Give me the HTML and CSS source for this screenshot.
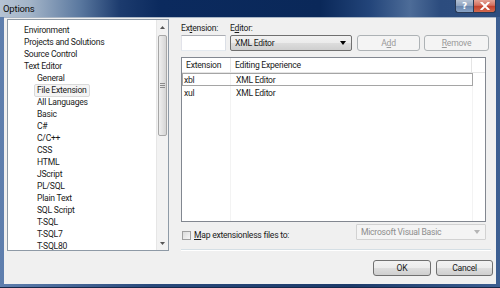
FILE: index.html
```html
<!DOCTYPE html>
<html>
<head>
<meta charset="utf-8">
<link rel="stylesheet" href="styles.css">
</head>
<body>
<div class="window">
  <div class="titlebar">
    <span class="title">Options</span>
    <div class="caption-buttons">
      <div class="cb help">?</div>
      <div class="cb close">
        <svg width="10" height="8" viewBox="0 0 10 8"><path d="M1.5 0.5 L8.5 7.5 M8.5 0.5 L1.5 7.5" stroke="#fff" stroke-width="2" stroke-linecap="square"/></svg>
      </div>
    </div>
  </div>
  <div class="client">
    <div class="main">
      <div class="tree">
        <ul class="tree-items">
          <li class="lvl0">Environment</li>
          <li class="lvl0">Projects and Solutions</li>
          <li class="lvl0">Source Control</li>
          <li class="lvl0">Text Editor</li>
          <li class="lvl1">General</li>
          <li class="lvl1"><span class="selected">File Extension</span></li>
          <li class="lvl1">All Languages</li>
          <li class="lvl1">Basic</li>
          <li class="lvl1">C#</li>
          <li class="lvl1">C/C++</li>
          <li class="lvl1">CSS</li>
          <li class="lvl1">HTML</li>
          <li class="lvl1">JScript</li>
          <li class="lvl1">PL/SQL</li>
          <li class="lvl1">Plain Text</li>
          <li class="lvl1">SQL Script</li>
          <li class="lvl1">T-SQL</li>
          <li class="lvl1">T-SQL7</li>
          <li class="lvl1">T-SQL80</li>
        </ul>
        <div class="vscroll">
          <div class="sarrow up"><svg width="5" height="3" viewBox="0 0 5 3"><path d="M0 3 L2.5 0 L5 3Z" fill="#555"/></svg></div>
          <div class="track">
            <div class="thumb">
              <div class="grip"></div>
            </div>
          </div>
          <div class="sarrow down"><svg width="5" height="3" viewBox="0 0 5 3"><path d="M0 0 L2.5 3 L5 0Z" fill="#555"/></svg></div>
        </div>
      </div>
      <div class="panel">
        <div class="labels">
          <span class="lbl lbl-ext">Ex<u>t</u>ension:</span>
          <span class="lbl">E<u>d</u>itor:</span>
        </div>
        <div class="controls">
          <div class="textbox"></div>
          <div class="combo combo-editor">
            <span>XML Editor</span>
            <svg width="6" height="4" viewBox="0 0 6 4"><path d="M0 0 L6 0 L3 4Z" fill="#000"/></svg>
          </div>
          <div class="btn btn-disabled btn-add">A<u>d</u>d</div>
          <div class="btn btn-disabled btn-remove"><u>R</u>emove</div>
        </div>
        <div class="listview">
          <div class="lv-header">
            <div class="col c1">Extension</div>
            <div class="col c2">Editing Experience</div>
            <div class="col c3"></div>
          </div>
          <div class="lv-body">
            <div class="colline l1"></div>
            <div class="colline l2"></div>
            <div class="row focused"><span class="c1">xbl</span><span class="c2">XML Editor</span></div>
            <div class="row"><span class="c1">xul</span><span class="c2">XML Editor</span></div>
          </div>
        </div>
        <div class="map-row">
          <div class="check-wrap">
            <span class="checkbox"></span>
            <span class="map-label"><u>M</u>ap extensionless files to:</span>
          </div>
          <div class="combo combo-disabled">
            <span>Microsoft Visual Basic</span>
            <svg width="6" height="4" viewBox="0 0 6 4"><path d="M0 0 L6 0 L3 4Z" fill="#b5b5b5"/></svg>
          </div>
        </div>
        <div class="sep"></div>
      </div>
    </div>
    <div class="buttons">
      <div class="btn btn-ok">OK</div>
      <div class="btn btn-cancel">Cancel</div>
    </div>
  </div>
</div>
</body>
</html>
```

FILE: styles.css
```css
* { box-sizing: border-box; }
html, body { margin: 0; padding: 0; }
body {
  width: 500px;
  height: 288px;
  overflow: hidden;
  font-family: Roboto, "Noto Sans", sans-serif;
  font-size: 8.6px;
  letter-spacing: -0.25px;
  color: #1a1a1a;
}
.window {
  width: 500px;
  height: 288px;
  display: flex;
  flex-direction: column;
  background: linear-gradient(to right, #5f7fae, #2a4a7c 30%, #1d3b6a 70%, #3d5f92);
  border-bottom: 1px solid #16284a;
}
.titlebar {
  height: 17px;
  flex: none;
  display: flex;
  align-items: flex-start;
  justify-content: space-between;
  background: linear-gradient(to right, #b5c3d3 0px, #a3b4c8 30px, #5a789f 80px, #1c3b6e 120px, #0b2a5e 160px, #0a2859 320px, #23457a 370px, #4d6c98 410px, #2c4c7e 440px, #2e4e80 500px);
}
.title {
  padding: 3px 0 0 3px;
  font-size: 9.5px;
  letter-spacing: -0.2px;
  color: #0d0d0d;
}
.caption-buttons {
  display: flex;
  margin-right: 4px;
}
.cb {
  height: 13px;
  display: flex;
  align-items: center;
  justify-content: center;
  border: 1px solid #2a3a55;
  border-top: none;
}
.help {
  width: 18px;
  border-radius: 0 0 0 3px;
  border-right: none;
  background: linear-gradient(#b4c1d3, #8ea2bf 50%, #6a86ad 51%, #89a3c6);
  color: #fff;
  font-family: "DejaVu Sans", sans-serif;
  font-weight: bold;
  font-size: 9px;
  letter-spacing: 0;
}
.close {
  width: 23px;
  border-radius: 0 0 3px 0;
  background: linear-gradient(#e4a397, #d46f5e 45%, #c3402c 50%, #d26a4f);
}
.client {
  flex: 1;
  margin: 0 4px 3px 4px;
  background: #f0f0f0;
  display: flex;
  flex-direction: column;
  padding: 1px 0 0 3px;
  border-top: 1px solid #a9b6c6;
}
.main {
  display: flex;
  align-items: flex-start;
}
.tree {
  width: 162px;
  height: 232px;
  border: 1px solid #8e9aa6;
  background: #fff;
  display: flex;
  overflow: hidden;
}
.tree-items {
  list-style: none;
  margin: 0;
  padding: 4px 0 0 0;
  flex: 1;
}
.tree-items li {
  height: 12px;
  line-height: 12px;
  white-space: nowrap;
}
.lvl0 { padding-left: 16px; }
.lvl1 { padding-left: 29px; }
.selected {
  display: inline-block;
  height: 13px;
  line-height: 11px;
  margin-left: -3px;
  padding: 0 2px;
  border: 1px solid #dadada;
  background: #f4f4f4;
  border-radius: 2px;
}
.vscroll {
  width: 12px;
  flex: none;
  display: flex;
  flex-direction: column;
  background: #f2f2f2;
  border-left: 1px solid #e6e6e6;
}
.sarrow {
  height: 14px;
  display: flex;
  align-items: center;
  justify-content: center;
}
.track {
  flex: 1;
  padding: 1px 1px;
}
.thumb {
  height: 101px;
  border: 1px solid #a7a7a7;
  border-radius: 2px;
  background: linear-gradient(to right, #efefef, #e2e2e2 50%, #d5d5d5);
  display: flex;
  align-items: center;
  justify-content: center;
}
.grip {
  width: 5px;
  height: 5px;
  border-top: 1px solid #8b8b8b;
  border-bottom: 1px solid #8b8b8b;
}
.grip::after {
  content: "";
  display: block;
  margin-top: 1px;
  height: 1px;
  background: #8b8b8b;
}
.panel {
  width: 310px;
  margin-left: 12px;
  display: flex;
  flex-direction: column;
}
.labels {
  height: 15px;
  padding-top: 5px;
  display: flex;
  line-height: 9px;
}
.lbl-ext { width: 49px; }
.controls {
  display: flex;
  height: 16px;
  margin-top: 1px;
}
.textbox {
  width: 45px;
  border: 1px solid #abadb3;
  border-color: #abadb3 #dbdfe6 #e3e9ef #e2e3ea;
  background: #fff;
}
.combo {
  display: flex;
  align-items: center;
  justify-content: space-between;
  padding: 0 5px 0 4px;
  border-radius: 2px;
}
.combo-editor {
  width: 122px;
  margin-left: 4px;
  border: 1px solid #707070;
  background: linear-gradient(#f2f2f2, #ebebeb 50%, #dddddd 51%, #cfcfcf);
}
.btn {
  display: flex;
  align-items: center;
  justify-content: center;
  height: 16px;
  border: 1px solid #707070;
  border-radius: 3px;
  background: linear-gradient(#f2f2f2, #ebebeb 50%, #dddddd 51%, #cfcfcf);
}
.btn-disabled {
  border-color: #adb2b5;
  background: #f4f4f4;
  color: #9a9a9a;
}
.btn-add { width: 63px; margin-left: 5px; }
.btn-remove { width: 65px; margin-left: 4px; }
.listview {
  width: 305px;
  height: 165px;
  margin-top: 6px;
  border: 1px solid #828790;
  background: #fff;
  display: flex;
  flex-direction: column;
}
.lv-header {
  height: 15px;
  display: flex;
  flex: none;
  border-bottom: 1px solid #e5e5e5;
}
.lv-header .col {
  line-height: 14px;
  padding-left: 4px;
  border-right: 1px solid #e5e5e5;
}
.lv-header .c1 { width: 49px; }
.lv-header .c2 { width: 241px; }
.lv-header .c3 { flex: 1; border-right: none; }
.lv-body {
  flex: 1;
  position: relative;
}
.colline {
  position: absolute;
  top: 0;
  bottom: 0;
  width: 1px;
  background: #f3f3f3;
}
.colline.l1 { left: 48px; }
.colline.l2 { left: 290px; }
.row {
  position: relative;
  height: 13px;
  display: flex;
  align-items: center;
  border: 1px solid transparent;
  width: 291px;
}
.row.focused { border-color: #a5a5a5; }
.row .c1 { width: 48px; padding-left: 1px; }
.row .c2 { padding-left: 5px; }
.map-row {
  height: 16px;
  margin-top: 2px;
  display: flex;
  justify-content: space-between;
  align-items: flex-start;
  padding-right: 5px;
}
.check-wrap {
  display: flex;
  align-items: center;
  margin-top: 6px;
  margin-left: 1px;
}
.checkbox {
  width: 9px;
  height: 9px;
  border: 1px solid #a0a0a0;
  background: linear-gradient(135deg, #dcdcdc, #f6f6f6);
  margin-right: 3px;
}
.combo-disabled {
  width: 130px;
  height: 16px;
  border: 1px solid #d2d2d2;
  background: #f4f4f4;
  color: #8d8d8d;
  border-radius: 1px;
}
.sep {
  height: 1px;
  margin-top: 9px;
  background: #d5dfe5;
  border-bottom: 1px solid #fff;
  box-sizing: content-box;
}
.buttons {
  display: flex;
  justify-content: flex-end;
  margin-top: 9px;
  padding-right: 3px;
}
.btn-ok { width: 58px; }
.btn-cancel { width: 57px; margin-left: 5px; }
```
